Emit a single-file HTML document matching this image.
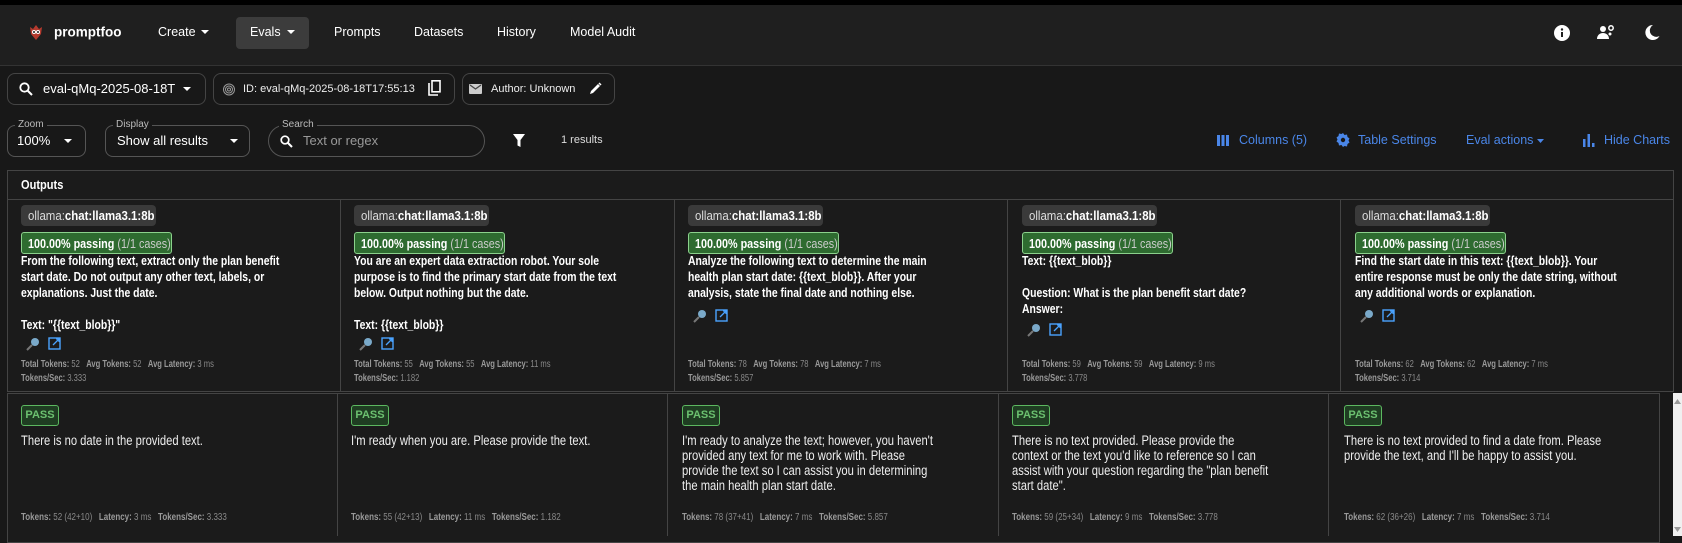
<!DOCTYPE html>
<html><head><meta charset="utf-8"><style>
*{box-sizing:border-box;margin:0;padding:0}
body{width:1682px;height:536px;overflow:hidden;background:#181818;font-family:"Liberation Sans",sans-serif;color:#fff;position:relative}
.a{position:absolute}
.nav{position:absolute;left:0;top:5px;width:1682px;height:61px;background:#1f1f1f;border-bottom:1px solid #333}
.ni{position:absolute;top:26px;font-size:12.5px;color:#fff;transform:translateY(-50%)}
.box{position:absolute;border:1px solid #444;border-radius:8px}
.lbl{position:absolute;top:-7px;font-size:10px;color:#bbb;background:#181818;padding:0 3px}
.blue{color:#4a86e8;font-size:12.5px}
.ln{white-space:nowrap;transform-origin:0 50%;display:block}
.pb{font-weight:bold;font-size:13px;line-height:16px;transform:scaleX(.8)}
.rb{font-size:13.5px;line-height:15px;transform:scaleX(.83);color:#eee}
.tag{position:absolute;height:21px;background:#3a3a3a;border-radius:4px;top:205px;width:135px}
.tag span{position:absolute;left:7px;top:3px;font-size:13px;color:#ddd;white-space:nowrap;transform:scaleX(.88);transform-origin:0 0}
.pass{position:absolute;top:232px;height:22px;width:151px;background:#2e6b30;border:1px solid #8bd18c;border-radius:3px}
.pass span{position:absolute;left:6px;top:3px;font-size:13px;font-weight:bold;white-space:nowrap;transform:scaleX(.83);transform-origin:0 0}
.pass i{font-style:normal;font-weight:normal;color:#ccc}
.st{position:absolute;font-size:10px;color:#888;white-space:nowrap;transform:scaleX(.76);transform-origin:0 0}
.st b{color:#999}
.vb{position:absolute;width:1px;background:#444}
.bp{position:absolute;top:405px;width:38px;height:21px;background:#1f3d22;border:1px solid #5cb860;border-radius:3px;color:#6cc070;font-weight:bold;font-size:11px;text-align:center;line-height:19px}
</style></head><body>
<div class="a" style="left:0;top:0;width:1682px;height:5px;background:#000"></div>
<div class="nav"></div>
<svg class="a" style="left:28px;top:24px" width="16" height="17" viewBox="0 0 16 17"><path d="M2 3l3 2 3-4 3 4 3-2-1 7-5 6-5-6z" fill="#b53a2e"/><circle cx="6" cy="8" r="2" fill="#fff"/><circle cx="10" cy="8" r="2" fill="#fff"/><circle cx="6" cy="8" r="1" fill="#222"/><circle cx="10" cy="8" r="1" fill="#222"/></svg>
<div class="ni" style="left:54px;top:32px;font-weight:bold;font-size:13.5px">promptfoo</div>
<div class="ni" style="left:158px;top:32px">Create</div>
<svg class="a" style="left:201px;top:30px" width="8" height="5"><path d="M0 0h8L4 4z" fill="#fff"/></svg>
<div class="a" style="left:236px;top:17px;width:73px;height:32px;background:#3c3c3c;border-radius:4px"></div>
<div class="ni" style="left:250px;top:32px">Evals</div>
<svg class="a" style="left:287px;top:30px" width="8" height="5"><path d="M0 0h8L4 4z" fill="#fff"/></svg>
<div class="ni" style="left:334px;top:32px">Prompts</div>
<div class="ni" style="left:414px;top:32px">Datasets</div>
<div class="ni" style="left:497px;top:32px">History</div>
<div class="ni" style="left:570px;top:32px">Model Audit</div>
<svg class="a" style="left:1554px;top:25px" width="16" height="16"><circle cx="8" cy="8" r="8" fill="#fff"/><rect x="7" y="7" width="2" height="5" fill="#1f1f1f"/><circle cx="8" cy="4.5" r="1.2" fill="#1f1f1f"/></svg>
<svg class="a" style="left:1597px;top:24px" width="18" height="17"><circle cx="6" cy="5" r="3" fill="#fff"/><path d="M0 15c0-4 3-6 6-6s6 2 6 6z" fill="#fff"/><circle cx="14" cy="4" r="2.2" fill="none" stroke="#fff" stroke-width="1.5"/><circle cx="13" cy="10" r="1.5" fill="#fff"/></svg>
<svg class="a" style="left:1644px;top:24px" width="16" height="17"><path d="M9 1a7.5 7.5 0 1 0 6.5 11A6 6 0 0 1 9 1z" fill="#fff"/></svg>

<div class="box" style="left:7px;top:73px;width:199px;height:32px"></div>
<svg class="a" style="left:19px;top:82px" width="14" height="14"><circle cx="5.5" cy="5.5" r="4.2" fill="none" stroke="#fff" stroke-width="1.8"/><path d="M8.5 8.5l4.5 4.5" stroke="#fff" stroke-width="2"/></svg>
<div class="a" style="left:43px;top:81px;font-size:13px;white-space:nowrap;width:133px;overflow:hidden">eval-qMq-2025-08-18T17:55:13</div>
<svg class="a" style="left:183px;top:87px" width="8" height="5"><path d="M0 0h8L4 4z" fill="#fff"/></svg>
<div class="box" style="left:213px;top:73px;width:242px;height:32px"></div>
<svg class="a" style="left:223px;top:83px" width="12" height="13"><g fill="none" stroke="#999" stroke-width="1"><circle cx="6" cy="6.5" r="5.5"/><circle cx="6" cy="6.5" r="3.5"/><circle cx="6" cy="6.5" r="1.5"/></g></svg>
<div class="a" style="left:243px;top:83px;font-size:11px;white-space:nowrap;color:#eee">ID: eval-qMq-2025-08-18T17:55:13</div>
<svg class="a" style="left:428px;top:80px" width="13" height="16"><path d="M1 3v12h9" fill="none" stroke="#fff" stroke-width="1.6"/><rect x="4" y="0.8" width="8" height="11" fill="none" stroke="#fff" stroke-width="1.6"/></svg>
<div class="box" style="left:462px;top:73px;width:153px;height:32px"></div>
<svg class="a" style="left:469px;top:84px" width="13" height="10"><rect width="13" height="10" rx="1" fill="#ccc"/><path d="M1 1l5.5 4 5.5-4" fill="none" stroke="#444" stroke-width="1.3"/></svg>
<div class="a" style="left:491px;top:83px;font-size:11px;white-space:nowrap;color:#eee">Author: Unknown</div>
<svg class="a" style="left:589px;top:82px" width="13" height="13"><path d="M1 12l1-3 7-7 2 2-7 7z" fill="#fff"/><path d="M10 1l2 2" stroke="#fff" stroke-width="1.5"/></svg>

<div class="box" style="left:7px;top:125px;width:79px;height:32px;border-color:#555"><span class="lbl" style="left:7px">Zoom</span></div>
<div class="a" style="left:17px;top:133px;font-size:13px">100%</div>
<svg class="a" style="left:64px;top:139px" width="8" height="5"><path d="M0 0h8L4 4z" fill="#fff"/></svg>
<div class="box" style="left:105px;top:125px;width:145px;height:32px;border-color:#555"><span class="lbl" style="left:7px">Display</span></div>
<div class="a" style="left:117px;top:133px;font-size:13px">Show all results</div>
<svg class="a" style="left:230px;top:139px" width="8" height="5"><path d="M0 0h8L4 4z" fill="#fff"/></svg>
<div class="box" style="left:268px;top:125px;width:217px;height:32px;border-radius:16px;border-color:#555"><span class="lbl" style="left:10px">Search</span></div>
<svg class="a" style="left:280px;top:135px" width="13" height="13"><circle cx="5" cy="5" r="3.8" fill="none" stroke="#fff" stroke-width="1.7"/><path d="M8 8l4 4" stroke="#fff" stroke-width="2"/></svg>
<div class="a" style="left:303px;top:133px;font-size:13px;color:#999">Text or regex</div>
<svg class="a" style="left:513px;top:134px" width="12" height="13"><path d="M0 0h12L7.5 6v7l-3-1.5V6z" fill="#fff"/></svg>
<div class="a" style="left:561px;top:134px;font-size:11px;color:#ddd">1 results</div>
<svg class="a" style="left:1217px;top:135px" width="12" height="11"><rect x="0" width="3" height="11" fill="#4a86e8"/><rect x="4.5" width="3" height="11" fill="#4a86e8"/><rect x="9" width="3" height="11" fill="#4a86e8"/></svg>
<div class="a blue" style="left:1239px;top:133px">Columns (5)</div>
<svg class="a" style="left:1336px;top:133px" width="14" height="14" viewBox="0 0 14 14"><path d="M7 0l1.5 2 2.5-.5.5 2.5 2 1.5-1 2 1 2-2 1.5-.5 2.5-2.5-.5L7 14l-1.5-2-2.5.5-.5-2.5-2-1.5 1-2-1-2 2-1.5.5-2.5 2.5.5z" fill="#4a86e8"/><circle cx="7" cy="7" r="2.2" fill="#181818"/></svg>
<div class="a blue" style="left:1358px;top:133px">Table Settings</div>
<div class="a blue" style="left:1466px;top:133px">Eval actions</div>
<svg class="a" style="left:1537px;top:139px" width="7" height="4"><path d="M0 0h7L3.5 4z" fill="#4a86e8"/></svg>
<svg class="a" style="left:1583px;top:134px" width="12" height="13"><rect x="0" y="5" width="2.5" height="8" fill="#4a86e8"/><rect x="4.5" y="0" width="2.5" height="13" fill="#4a86e8"/><rect x="9" y="9" width="2.5" height="4" fill="#4a86e8"/></svg>
<div class="a blue" style="left:1604px;top:133px">Hide Charts</div>

<div class="a" style="left:7px;top:170px;width:1667px;height:222px;border:1px solid #444;background:#1b1b1b"></div>
<div class="a" style="left:7px;top:199px;width:1667px;height:1px;background:#444"></div>
<div class="a" style="left:21px;top:177px;font-weight:bold;font-size:13px;transform:scaleX(.85);transform-origin:0 0">Outputs</div>
<div class="vb" style="left:340px;top:199px;height:193px"></div>
<div class="vb" style="left:674px;top:199px;height:193px"></div>
<div class="vb" style="left:1007px;top:199px;height:193px"></div>
<div class="vb" style="left:1340px;top:199px;height:193px"></div>

<div class="tag" style="left:21px"><span>ollama:<b style="color:#fff">chat:llama3.1:8b</b></span></div>
<div class="pass" style="left:21px"><span>100.00% passing <i>(1/1 cases)</i></span></div>
<div class="a" style="left:21px;top:253px"><span class="ln pb">From the following text, extract only the plan benefit</span><span class="ln pb">start date. Do not output any other text, labels, or</span><span class="ln pb">explanations. Just the date.</span><span class="ln pb">&nbsp;</span><span class="ln pb">Text: "{{text_blob}}"</span></div>
<div class="tag" style="left:354px"><span>ollama:<b style="color:#fff">chat:llama3.1:8b</b></span></div>
<div class="pass" style="left:354px"><span>100.00% passing <i>(1/1 cases)</i></span></div>
<div class="a" style="left:354px;top:253px"><span class="ln pb">You are an expert data extraction robot. Your sole</span><span class="ln pb">purpose is to find the primary start date from the text</span><span class="ln pb">below. Output nothing but the date.</span><span class="ln pb">&nbsp;</span><span class="ln pb">Text: {{text_blob}}</span></div>
<div class="tag" style="left:688px"><span>ollama:<b style="color:#fff">chat:llama3.1:8b</b></span></div>
<div class="pass" style="left:688px"><span>100.00% passing <i>(1/1 cases)</i></span></div>
<div class="a" style="left:688px;top:253px"><span class="ln pb">Analyze the following text to determine the main</span><span class="ln pb">health plan start date: {{text_blob}}. After your</span><span class="ln pb">analysis, state the final date and nothing else.</span></div>
<div class="tag" style="left:1022px"><span>ollama:<b style="color:#fff">chat:llama3.1:8b</b></span></div>
<div class="pass" style="left:1022px"><span>100.00% passing <i>(1/1 cases)</i></span></div>
<div class="a" style="left:1022px;top:253px"><span class="ln pb">Text: {{text_blob}}</span><span class="ln pb">&nbsp;</span><span class="ln pb">Question: What is the plan benefit start date?</span><span class="ln pb">Answer:</span></div>
<div class="tag" style="left:1355px"><span>ollama:<b style="color:#fff">chat:llama3.1:8b</b></span></div>
<div class="pass" style="left:1355px"><span>100.00% passing <i>(1/1 cases)</i></span></div>
<div class="a" style="left:1355px;top:253px"><span class="ln pb">Find the start date in this text: {{text_blob}}. Your</span><span class="ln pb">entire response must be only the date string, without</span><span class="ln pb">any additional words or explanation.</span></div>

<svg class="a" style="left:26px;top:337px" width="40" height="14"><circle cx="9" cy="5" r="4" fill="#7aa9c9"/><path d="M6 8l-5 5" stroke="#777" stroke-width="2"/><rect x="23" y="1" width="11" height="11" fill="none" stroke="#4aa3ff" stroke-width="1.4"/><path d="M27 8l6-6M30 2h3v3" stroke="#4aa3ff" stroke-width="1.3" fill="none"/></svg>
<svg class="a" style="left:359px;top:337px" width="40" height="14"><circle cx="9" cy="5" r="4" fill="#7aa9c9"/><path d="M6 8l-5 5" stroke="#777" stroke-width="2"/><rect x="23" y="1" width="11" height="11" fill="none" stroke="#4aa3ff" stroke-width="1.4"/><path d="M27 8l6-6M30 2h3v3" stroke="#4aa3ff" stroke-width="1.3" fill="none"/></svg>
<svg class="a" style="left:693px;top:309px" width="40" height="14"><circle cx="9" cy="5" r="4" fill="#7aa9c9"/><path d="M6 8l-5 5" stroke="#777" stroke-width="2"/><rect x="23" y="1" width="11" height="11" fill="none" stroke="#4aa3ff" stroke-width="1.4"/><path d="M27 8l6-6M30 2h3v3" stroke="#4aa3ff" stroke-width="1.3" fill="none"/></svg>
<svg class="a" style="left:1027px;top:323px" width="40" height="14"><circle cx="9" cy="5" r="4" fill="#7aa9c9"/><path d="M6 8l-5 5" stroke="#777" stroke-width="2"/><rect x="23" y="1" width="11" height="11" fill="none" stroke="#4aa3ff" stroke-width="1.4"/><path d="M27 8l6-6M30 2h3v3" stroke="#4aa3ff" stroke-width="1.3" fill="none"/></svg>
<svg class="a" style="left:1360px;top:309px" width="40" height="14"><circle cx="9" cy="5" r="4" fill="#7aa9c9"/><path d="M6 8l-5 5" stroke="#777" stroke-width="2"/><rect x="23" y="1" width="11" height="11" fill="none" stroke="#4aa3ff" stroke-width="1.4"/><path d="M27 8l6-6M30 2h3v3" stroke="#4aa3ff" stroke-width="1.3" fill="none"/></svg>

<div class="st" style="left:21px;top:359px"><b>Total Tokens:</b> 52 &nbsp;&nbsp;<b>Avg Tokens:</b> 52 &nbsp;&nbsp;<b>Avg Latency:</b> 3 ms</div>
<div class="st" style="left:21px;top:373px"><b>Tokens/Sec:</b> 3.333</div>
<div class="st" style="left:354px;top:359px"><b>Total Tokens:</b> 55 &nbsp;&nbsp;<b>Avg Tokens:</b> 55 &nbsp;&nbsp;<b>Avg Latency:</b> 11 ms</div>
<div class="st" style="left:354px;top:373px"><b>Tokens/Sec:</b> 1.182</div>
<div class="st" style="left:688px;top:359px"><b>Total Tokens:</b> 78 &nbsp;&nbsp;<b>Avg Tokens:</b> 78 &nbsp;&nbsp;<b>Avg Latency:</b> 7 ms</div>
<div class="st" style="left:688px;top:373px"><b>Tokens/Sec:</b> 5.857</div>
<div class="st" style="left:1022px;top:359px"><b>Total Tokens:</b> 59 &nbsp;&nbsp;<b>Avg Tokens:</b> 59 &nbsp;&nbsp;<b>Avg Latency:</b> 9 ms</div>
<div class="st" style="left:1022px;top:373px"><b>Tokens/Sec:</b> 3.778</div>
<div class="st" style="left:1355px;top:359px"><b>Total Tokens:</b> 62 &nbsp;&nbsp;<b>Avg Tokens:</b> 62 &nbsp;&nbsp;<b>Avg Latency:</b> 7 ms</div>
<div class="st" style="left:1355px;top:373px"><b>Tokens/Sec:</b> 3.714</div>

<div class="a" style="left:7px;top:393px;width:1653px;height:150px;border:1px solid #444;background:#1b1b1b"></div>
<div class="vb" style="left:337px;top:393px;height:143px"></div>
<div class="vb" style="left:667px;top:393px;height:143px"></div>
<div class="vb" style="left:998px;top:393px;height:143px"></div>
<div class="vb" style="left:1328px;top:393px;height:143px"></div>
<div class="a" style="left:1673px;top:393px;width:9px;height:143px;background:#f0f0f0"></div>
<svg class="a" style="left:1674px;top:399px" width="7" height="5"><path d="M0 5h7L3.5 0z" fill="#999"/></svg>
<svg class="a" style="left:1674px;top:527px" width="7" height="5"><path d="M0 0h7L3.5 5z" fill="#999"/></svg>

<div class="bp" style="left:21px">PASS</div>
<div class="bp" style="left:351px">PASS</div>
<div class="bp" style="left:682px">PASS</div>
<div class="bp" style="left:1012px">PASS</div>
<div class="bp" style="left:1344px">PASS</div>

<div class="a" style="left:21px;top:433px"><span class="ln rb">There is no date in the provided text.</span></div>
<div class="a" style="left:351px;top:433px"><span class="ln rb">I'm ready when you are. Please provide the text.</span></div>
<div class="a" style="left:682px;top:433px"><span class="ln rb">I'm ready to analyze the text; however, you haven't</span><span class="ln rb">provided any text for me to work with. Please</span><span class="ln rb">provide the text so I can assist you in determining</span><span class="ln rb">the main health plan start date.</span></div>
<div class="a" style="left:1012px;top:433px"><span class="ln rb">There is no text provided. Please provide the</span><span class="ln rb">context or the text you'd like to reference so I can</span><span class="ln rb">assist with your question regarding the "plan benefit</span><span class="ln rb">start date".</span></div>
<div class="a" style="left:1344px;top:433px"><span class="ln rb">There is no text provided to find a date from. Please</span><span class="ln rb">provide the text, and I'll be happy to assist you.</span></div>

<div class="st" style="left:21px;top:512px;transform:scaleX(.8)"><b>Tokens:</b> 52 (42+10) &nbsp;&nbsp;<b>Latency:</b> 3 ms &nbsp;&nbsp;<b>Tokens/Sec:</b> 3.333</div>
<div class="st" style="left:351px;top:512px;transform:scaleX(.8)"><b>Tokens:</b> 55 (42+13) &nbsp;&nbsp;<b>Latency:</b> 11 ms &nbsp;&nbsp;<b>Tokens/Sec:</b> 1.182</div>
<div class="st" style="left:682px;top:512px;transform:scaleX(.8)"><b>Tokens:</b> 78 (37+41) &nbsp;&nbsp;<b>Latency:</b> 7 ms &nbsp;&nbsp;<b>Tokens/Sec:</b> 5.857</div>
<div class="st" style="left:1012px;top:512px;transform:scaleX(.8)"><b>Tokens:</b> 59 (25+34) &nbsp;&nbsp;<b>Latency:</b> 9 ms &nbsp;&nbsp;<b>Tokens/Sec:</b> 3.778</div>
<div class="st" style="left:1344px;top:512px;transform:scaleX(.8)"><b>Tokens:</b> 62 (36+26) &nbsp;&nbsp;<b>Latency:</b> 7 ms &nbsp;&nbsp;<b>Tokens/Sec:</b> 3.714</div>
</body></html>
